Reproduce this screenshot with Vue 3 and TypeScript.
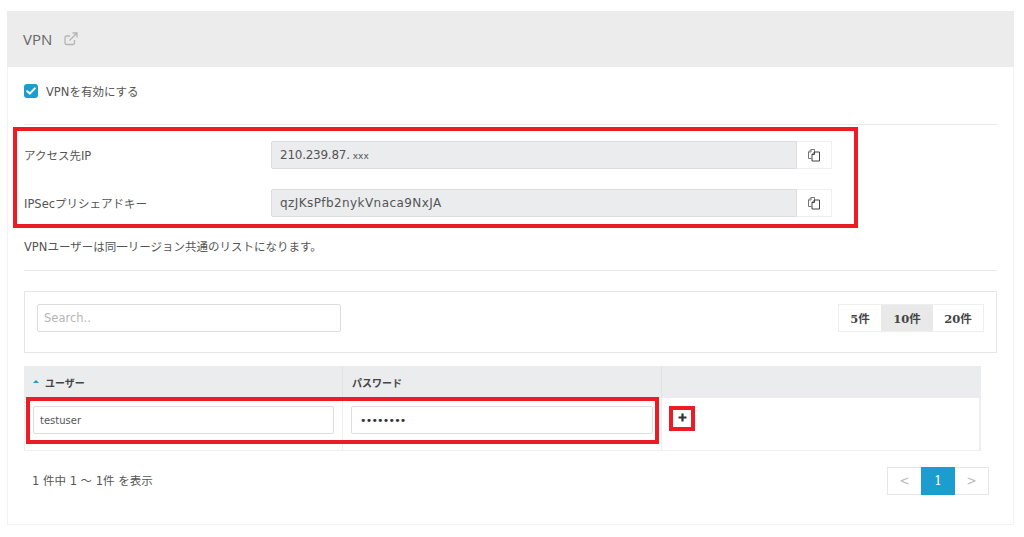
<script setup lang="ts">
const fields = [
  { label: 'アクセス先IP', value: '210.239.87.', tail: 'xxx' },
  { label: 'IPSecプリシェアドキー', value: 'qzJKsPfb2nykVnaca9NxJA', tail: '' },
]
const sizes = [
  { label: '5件', active: false },
  { label: '10件', active: true },
  { label: '20件', active: false },
]
</script>

<template>
  <div class="page">
    <section class="card">
      <header class="card-head">
        <span class="title">VPN</span>
        <svg class="ext" width="14" height="14" viewBox="0 0 14 14" fill="none" stroke="#b4b4b4" stroke-width="1.3">
          <path d="M10.5 8v3a1.5 1.5 0 0 1-1.5 1.5H2.5A1.5 1.5 0 0 1 1 11V5.500A1.500 1.500 0 0 1 2.500 4H6" />
          <path d="M5.500 8.500 12.500 1.500M8.500 1h4.500v4.500" />
        </svg>
      </header>

      <div class="card-body">
        <label class="check-row">
          <span class="check">
            <svg width="10" height="8" viewBox="0 0 10 8" fill="none" stroke="#fff" stroke-width="2" stroke-linecap="round" stroke-linejoin="round">
              <path d="M1.200 4.200 3.800 6.600 8.800 1.400" />
            </svg>
          </span>
          <span>VPNを有効にする</span>
        </label>

        <hr class="rule rule-top" />

        <div class="fields">
          <div v-for="f in fields" :key="f.label" class="field">
            <span class="field-label">{{ f.label }}</span>
            <div class="readonly" :class="{ masked: f.tail }">{{ f.value }}<span v-if="f.tail" class="tail">{{ f.tail }}</span></div>
            <button class="copy" type="button">
              <svg width="14" height="14" viewBox="0 0 14 14" fill="none" stroke="#444" stroke-width="1">
                <path d="M4.500 10.500H1.500V4L4 1.500H7.500V4" stroke="#777" />
                <path d="M4 1.500V4H1.500" stroke="#777" />
                <path d="M5 6.500 7.500 4H12.500V13H5Z" />
                <path d="M7.500 4V6.500H5" />
              </svg>
            </button>
          </div>
          <span class="mark mark-fields"></span>
        </div>

        <p class="note">VPNユーザーは同一リージョン共通のリストになります。</p>

        <hr class="rule rule-bottom" />

        <div class="toolbar">
          <input class="search" type="text" placeholder="Search.." />
          <div class="sizes">
            <button v-for="s in sizes" :key="s.label" type="button" class="size" :class="{ on: s.active }">{{ s.label }}</button>
          </div>
        </div>

        <div class="table">
          <div class="thead">
            <div class="th c1"><span class="caret"></span>ユーザー</div>
            <div class="th c2">パスワード</div>
            <div class="th c3"></div>
          </div>
          <div class="tbody">
            <div class="td c1"><input class="cell-input" type="text" value="testuser" /></div>
            <div class="td c2"><input class="cell-input secret" type="password" value="testuser" /></div>
            <div class="td c3">
              <button class="add" type="button">
                <svg width="9" height="9" viewBox="0 0 9 9" fill="#333"><path d="M3.400 0.500h2.200v2.900h2.900v2.200H5.600v2.900H3.400V5.600H0.500V3.400h2.900z" /></svg>
              </button>
            </div>
            <span class="mark mark-row"></span>
          </div>
        </div>

        <div class="footer">
          <span class="count">1 件中 1 ～ 1件 を表示</span>
          <div class="pager">
            <span class="pg muted">&lt;</span>
            <span class="pg current">1</span>
            <span class="pg muted">&gt;</span>
          </div>
        </div>
      </div>
    </section>
  </div>
</template>

<style>
html, body { margin: 0; background: #fff; }
</style>

<style scoped>
.page {
  width: 1024px;
  height: 537px;
  box-sizing: border-box;
  padding: 11px 10px 12px 7px;
  overflow: hidden;
  font-family: "DejaVu Sans", "Noto Sans CJK JP", sans-serif;
  font-size: 11.500px;
  color: #555;
}
.card {
  height: 514px;
  box-sizing: border-box;
  border: 1px solid #f3f3f3;
  border-top: 0;
  display: flex;
  flex-direction: column;
}
.card-head {
  height: 56px;
  flex: none;
  margin: 0 -1px;
  background: #ececec;
  display: flex;
  align-items: center;
  padding-left: 16px;
  gap: 12px;
}
.title { font-family: "Open Sans", sans-serif; font-size: 15px; color: #666; }
.card-body { padding: 0 16px 0 16px; position: relative; }
.check-row { display: flex; align-items: center; gap: 8px; height: 14px; margin-top: 17px; }
.check {
  width: 14px; height: 14px; border-radius: 3px; background: #1b9dd0;
  display: flex; align-items: center; justify-content: center;
}
.rule { border: 0; border-top: 1px solid #e8e8e8; margin: 0; }
.rule-top { margin-top: 26px; }
.fields { position: relative; padding-top: 16px; }
.field { display: flex; align-items: center; height: 28px; margin-bottom: 20px; }
.field:last-of-type { margin-bottom: 0; }
.field-label { width: 247px; flex: none; }
.readonly {
  width: 526px; height: 28px; box-sizing: border-box;
  background: #ebecee; border: 1px solid #dcdcdc; border-radius: 2px 0 0 2px;
  padding-left: 8px; line-height: 26px; font-size: 12px; letter-spacing: 0.420px; color: #555; white-space: nowrap;
}
.readonly.masked { letter-spacing: -0.250px; }
.tail { font-size: 9px; margin-left: 3px; letter-spacing: 0; }
.copy {
  width: 35px; height: 28px; box-sizing: border-box; padding: 0;
  background: #fff; border: 1px solid #eee; border-left: 0;
  display: flex; align-items: center; justify-content: center;
}
.mark { position: absolute; border: 4px solid #ed1c24; box-sizing: border-box; pointer-events: none; }
.mark-fields { left: -11px; top: 2px; width: 845px; height: 101px; }
.note { margin: 22px 0 0; line-height: 16px; height: 16px; }
.rule-bottom { margin-top: 15px; }
.toolbar {
  margin-top: 20px; height: 62px; box-sizing: border-box;
  border: 1px solid #e6e6e6; padding: 12px 12px 0 12px;
  display: flex; justify-content: space-between; align-items: flex-start;
}
.search {
  width: 304px; height: 28px; box-sizing: border-box;
  border: 1px solid #ddd; border-radius: 2px; padding: 0 6px;
  font-family: "DejaVu Sans", sans-serif; font-size: 11.500px; outline: 0;
}
.search::placeholder { color: #b5b5b5; }
.sizes { display: flex; height: 28px; box-sizing: border-box; border: 1px solid #eee; }
.size {
  border: 0; padding: 0; background: #fff; color: #444; height: 26px;
  font-family: "DejaVu Serif", "Noto Sans CJK JP", serif; font-weight: 700; font-size: 11.500px;
}
.size:nth-child(1) { width: 42px; }
.size:nth-child(2) { width: 52px; }
.size:nth-child(3) { width: 50px; }
.size.on { background: #e9e9e9; }
.table { margin-top: 13px; width: 957px; }
.thead { display: flex; height: 32px; background: #ebecee; }
.th { display: flex; align-items: center; font-weight: 700; font-size: 10px; color: #444; box-sizing: border-box; border-right: 1px solid #e2e2e2; padding-left: 9px; }
.th:last-child, .td:last-child { border-right: 0; }
.c1 { width: 319px; flex: none; }
.c2 { width: 319px; flex: none; }
.c3 { flex: 1; }
.caret { width: 0; height: 0; border: 3px solid transparent; border-top: 0; border-bottom: 3px solid #1b9dd0; margin-right: 6px; margin-top: -2px; }
.tbody { display: flex; height: 53px; position: relative; border: 1px solid #eee; border-top: 0; box-sizing: border-box; }
.td { box-sizing: border-box; border-right: 1px solid #eee; padding: 8px 8px 0 8px; }
.td.c1 { width: 318px; }
.cell-input {
  width: 100%; height: 28px; box-sizing: border-box;
  border: 1px solid #ddd; border-radius: 2px; padding: 0 6px;
  font-family: "DejaVu Sans", sans-serif; font-size: 10px; color: #555; outline: 0;
}
.secret { font-size: 11px; letter-spacing: -0.800px; padding-left: 8px; color: #333; }
.td.c3 { padding: 8px 0 0 7px; }
.add {
  width: 26px; height: 25px; box-sizing: border-box; padding: 0;
  background: #fff; border: 4px solid #ed1c24;
  display: flex; align-items: center; justify-content: center;
}
.add svg { margin-top: -2px; }
.mark-row { left: 1px; top: -1px; width: 633px; height: 47px; }
.footer { display: flex; justify-content: space-between; align-items: center; width: 965px; margin-top: 16px; height: 28px; padding-left: 8px; box-sizing: border-box; }
.count { margin-top: -2px; }
.pager { display: flex; height: 28px; box-sizing: border-box; }
.pg { width: 34px; box-sizing: border-box; border: 1px solid #e6e6e6; display: flex; align-items: center; justify-content: center; font-family: "DejaVu Serif", serif; font-size: 12px; }
.pg:first-child { border-right: 0; }
.pg:last-child { border-left: 0; }
.muted { color: #bbb; }
.current { background: #1b9dd0; border-color: #1b9dd0; color: #fff; }
</style>
